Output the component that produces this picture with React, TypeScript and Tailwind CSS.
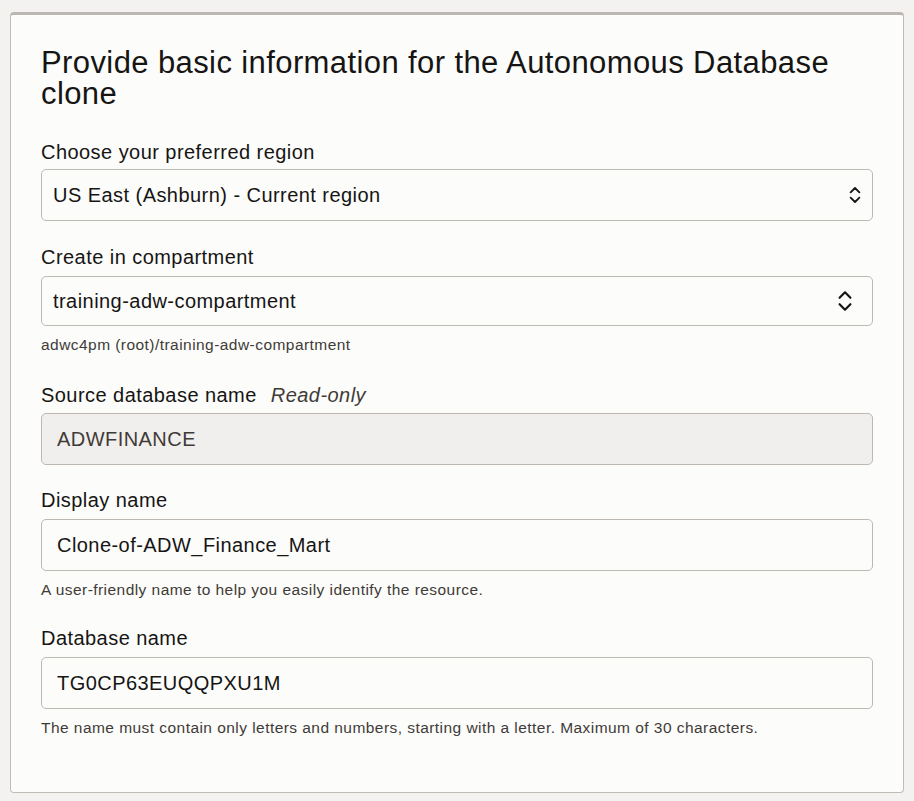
import React from "react";

function UpDown({ w, h, sw }: { w: number; h: number; sw: number }) {
  return (
    <svg width={w} height={h} viewBox="0 0 16 24" fill="none" stroke="#161513" strokeWidth={sw} strokeLinecap="round" strokeLinejoin="round">
      <path d="M3 9 L8 4 L13 9" />
      <path d="M3 15 L8 20 L13 15" />
    </svg>
  );
}

export default function App() {
  return (
    <div className="min-h-[801px] w-[914px] bg-[#f3f2f0] pt-[12px] pl-[10px]" style={{ fontFamily: '"Liberation Sans", Arial, sans-serif' }}>
      <div className="w-[894px] h-[781px] bg-[#fcfcfb] border border-[#c1bcb6] border-t-[3px] border-t-[#bcb7b1] rounded-[4px] pl-[30px] pr-[30px] pt-[32px] text-[#161513]">
        <h1 className="text-[31px] leading-[31px] tracking-[0.4px] font-normal">
          Provide basic information for the Autonomous Database clone
        </h1>

        <div className="mt-[31px] text-[20px] leading-[24px] tracking-[0.45px]">Choose your preferred region</div>
        <div className="mt-[5px] h-[52px] w-[832px] border border-[#bdb8b2] rounded-[5px] flex items-center justify-between pl-[11px] pr-[10px]">
          <span className="text-[20px] tracking-[0.45px]">US East (Ashburn) - Current region</span>
          <UpDown w={14} h={24} sw={2.1} />
        </div>

        <div className="mt-[24px] text-[20px] leading-[24px] tracking-[0.45px]">Create in compartment</div>
        <div className="mt-[7px] h-[50px] w-[832px] border border-[#bdb8b2] rounded-[5px] flex items-center justify-between pl-[11px] pr-[18px]">
          <span className="text-[20px] tracking-[0.45px]">training-adw-compartment</span>
          <UpDown w={18} h={26} sw={2} />
        </div>
        <div className="mt-[9px] text-[15.5px] leading-[20px] tracking-[0.45px] text-[#3f3b37]">adwc4pm (root)/training-adw-compartment</div>

        <div className="mt-[28px] text-[20px] leading-[24px] tracking-[0.45px]">
          Source database name <span className="ml-[8px] italic text-[#3f3b37]">Read-only</span>
        </div>
        <div className="mt-[6px] h-[52px] w-[832px] border border-[#bdb8b2] rounded-[5px] bg-[#f1efed] flex items-center pl-[15px]">
          <span className="text-[20px] tracking-[0.45px] text-[#3f3b37]">ADWFINANCE</span>
        </div>

        <div className="mt-[23px] text-[20px] leading-[24px] tracking-[0.45px]">Display name</div>
        <div className="mt-[7px] h-[52px] w-[832px] border border-[#bdb8b2] rounded-[5px] flex items-center pl-[15px]">
          <span className="text-[20px] tracking-[0.45px]">Clone-of-ADW_Finance_Mart</span>
        </div>
        <div className="mt-[9px] text-[15.5px] leading-[20px] tracking-[0.45px] text-[#3f3b37]">A user-friendly name to help you easily identify the resource.</div>

        <div className="mt-[26px] text-[20px] leading-[24px] tracking-[0.45px]">Database name</div>
        <div className="mt-[7px] h-[52px] w-[832px] border border-[#bdb8b2] rounded-[5px] flex items-center pl-[15px]">
          <span className="text-[20px] tracking-[0.45px]">TG0CP63EUQQPXU1M</span>
        </div>
        <div className="mt-[9px] text-[15.5px] leading-[20px] tracking-[0.45px] text-[#3f3b37]">The name must contain only letters and numbers, starting with a letter. Maximum of 30 characters.</div>
      </div>
    </div>
  );
}
